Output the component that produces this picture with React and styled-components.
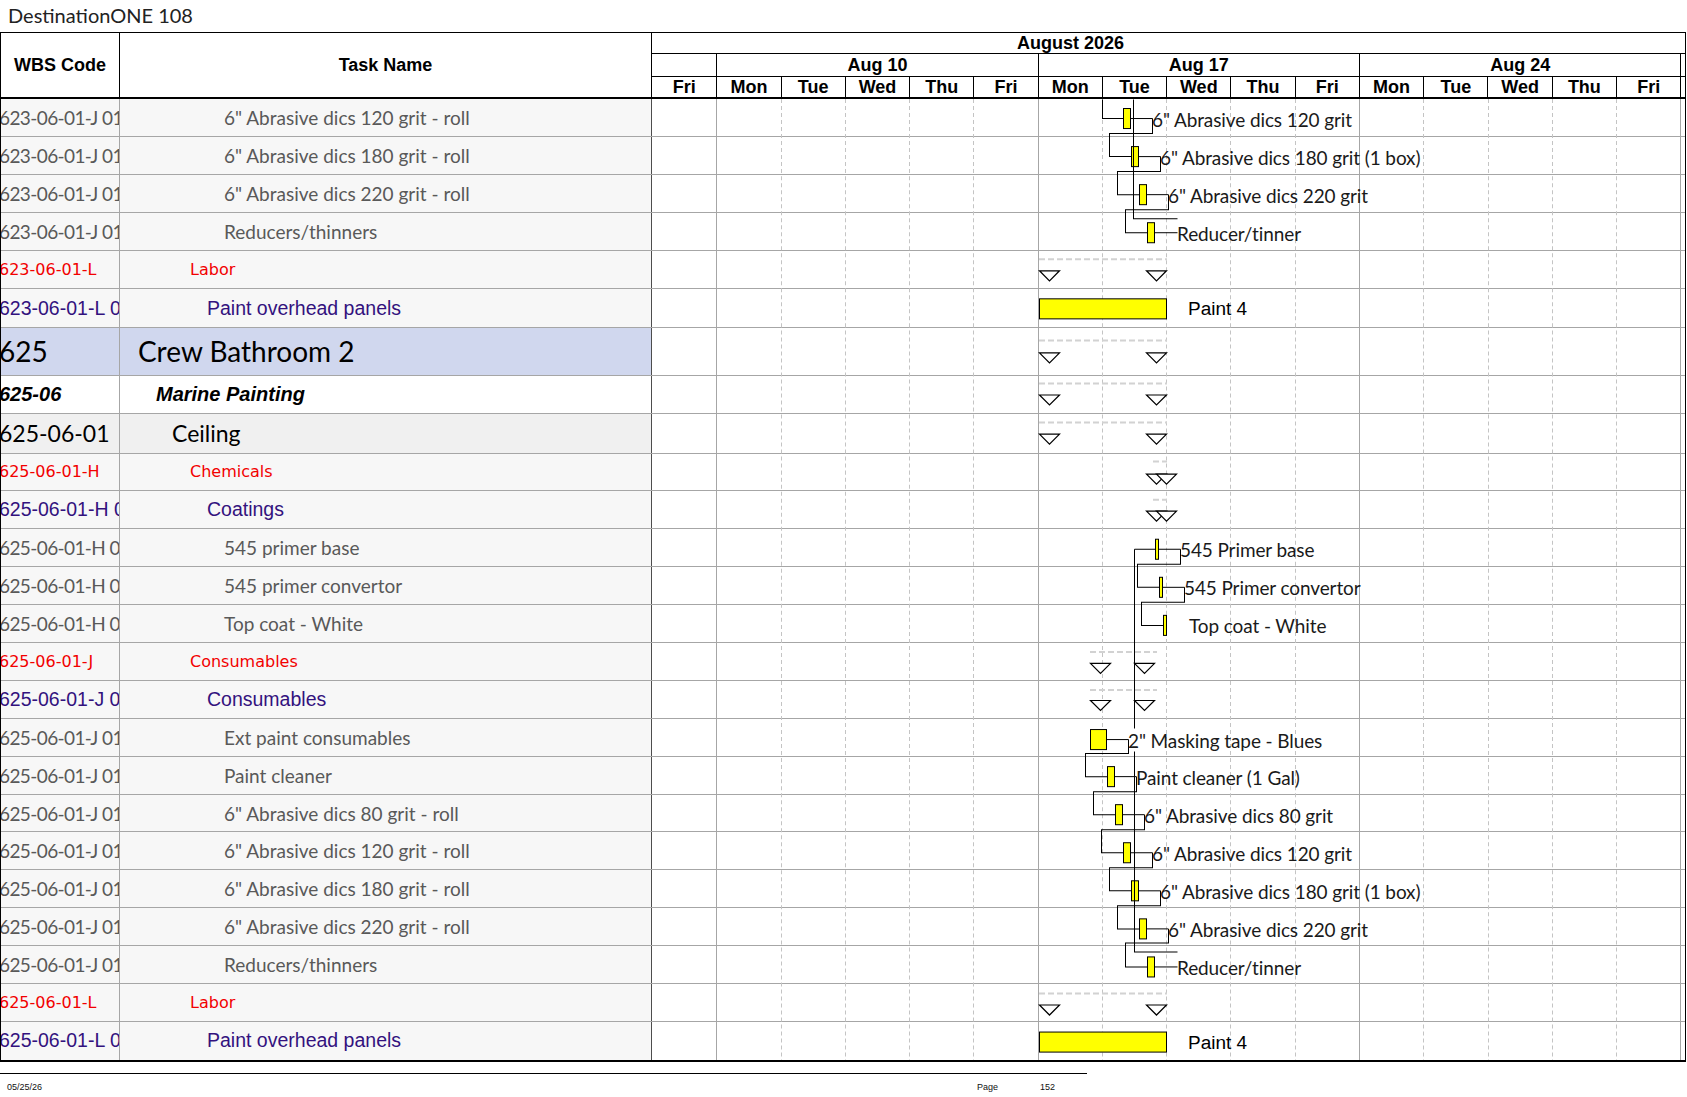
import React from 'react'
import styled, { createGlobalStyle, css } from 'styled-components'

const GlobalStyle = createGlobalStyle`
  html, body {
    margin: 0;
    padding: 0;
    background: #fff;
  }
  body {
    font-family: 'Liberation Sans', Arial, sans-serif;
  }
  * {
    box-sizing: border-box;
  }
`

const Page = styled.div`
  width: 1687px;
  height: 1097px;
  overflow: hidden;
  background: #fff;
`

const Title = styled.div`
  height: 32px;
  padding-left: 8px;
  font-family: Lato, sans-serif;
  font-size: 20px;
  line-height: 30px;
  color: #222;
`

const Table = styled.div`
  width: 1686px;
  border: 1px solid #000;
  border-bottom: 2px solid #000;
`

const Header = styled.div`
  display: flex;
  height: 66px;
  border-bottom: 2px solid #000;
`

const HeadCell = styled.div`
  flex: none;
  width: ${p => p.$w}px;
  display: flex;
  align-items: center;
  justify-content: center;
  border-right: 1px solid #000;
  font-size: 18px;
  font-weight: bold;
`

const Timescale = styled.div`
  flex: 1;
  display: flex;
  flex-direction: column;
`

const ScaleRow = styled.div`
  display: flex;
  height: ${p => p.$h}px;
  border-bottom: ${p => (p.$last ? 'none' : '1px solid #000')};
`

const ScaleCell = styled.div`
  flex: ${p => (p.$w ? 'none' : '1')};
  width: ${p => (p.$w ? `${p.$w}px` : 'auto')};
  display: flex;
  align-items: center;
  justify-content: ${p => (p.$pad ? 'flex-start' : 'center')};
  padding-left: ${p => p.$pad || 0}px;
  border-right: ${p => (p.$open ? 'none' : '1px solid #000')};
  font-size: 18px;
  font-weight: bold;
  line-height: 1;
  white-space: nowrap;
`

const Body = styled.div`
  position: relative;
`

const Row = styled.div`
  display: flex;
  height: ${p => p.$h}px;
  border-bottom: ${p => (p.$last ? 'none' : '1px solid #a6a6a6')};
`

const kindFont = {
  item: css`
    font-family: Lato, sans-serif;
    font-size: 19px;
    color: #595959;
  `,
  group: css`
    font-family: 'DejaVu Sans', sans-serif;
    font-size: 16px;
    color: #f20000;
  `,
  sub: css`
    font-family: 'Liberation Sans', Arial, sans-serif;
    font-size: 19.5px;
    color: #33127e;
  `,
  area: css`
    font-family: Lato, sans-serif;
    font-size: 28px;
    color: #000;
  `,
  trade: css`
    font-family: 'Liberation Sans', Arial, sans-serif;
    font-size: 20px;
    font-weight: bold;
    font-style: italic;
    color: #000;
  `,
  zone: css`
    font-family: Lato, sans-serif;
    font-size: 23px;
    color: #000;
  `,
}

const indent = { item: 104, group: 70, sub: 87, area: 18, trade: 36, zone: 52 }
const rowBg = { area: '#d0d7ee', trade: '#fff', zone: '#f0f0f0' }

const WbsCell = styled.div`
  flex: none;
  width: 119px;
  display: flex;
  align-items: center;
  overflow: hidden;
  white-space: nowrap;
  text-indent: -2px;
  border-right: 1px solid #a6a6a6;
  background: ${p => rowBg[p.$kind] || '#f7f7f7'};
  ${p => kindFont[p.$kind]}
  ${p => p.$kind === 'item' && css`
    letter-spacing: -0.6px;
  `}
`

const TaskCell = styled.div`
  flex: none;
  width: 532px;
  display: flex;
  align-items: center;
  padding-left: ${p => indent[p.$kind]}px;
  overflow: hidden;
  white-space: nowrap;
  border-right: 1px solid #4d4d4d;
  background: ${p => rowBg[p.$kind] || '#f7f7f7'};
  ${p => kindFont[p.$kind]}
`

const GanttCell = styled.div`
  flex: 1;
  background: #fff;
`

const Chart = styled.svg`
  position: absolute;
  top: 0;
  left: 651px;
  pointer-events: none;
`

const Footer = styled.div`
  width: 1087px;
  margin-top: 11px;
  border-top: 1.5px solid #000;
  padding: 8px 0 0 7px;
  display: grid;
  grid-template-columns: 970px 63px auto;
  font-size: 9px;
  color: #111;
`

const rows = [
  { wbs: '623-06-01-J 01 04', name: '6" Abrasive dics 120 grit - roll', kind: 'item' },
  { wbs: '623-06-01-J 01 05', name: '6" Abrasive dics 180 grit - roll', kind: 'item' },
  { wbs: '623-06-01-J 01 06', name: '6" Abrasive dics 220 grit - roll', kind: 'item' },
  { wbs: '623-06-01-J 01 07', name: 'Reducers/thinners', kind: 'item' },
  { wbs: '623-06-01-L', name: 'Labor', kind: 'group' },
  { wbs: '623-06-01-L 01', name: 'Paint overhead panels', kind: 'sub' },
  { wbs: '625', name: 'Crew Bathroom 2', kind: 'area', h: 48.6 },
  { wbs: '625-06', name: 'Marine Painting', kind: 'trade', h: 37.4 },
  { wbs: '625-06-01', name: 'Ceiling', kind: 'zone', h: 40 },
  { wbs: '625-06-01-H', name: 'Chemicals', kind: 'group' },
  { wbs: '625-06-01-H 01', name: 'Coatings', kind: 'sub' },
  { wbs: '625-06-01-H 01 01', name: '545 primer base', kind: 'item' },
  { wbs: '625-06-01-H 01 02', name: '545 primer convertor', kind: 'item' },
  { wbs: '625-06-01-H 01 03', name: 'Top coat - White', kind: 'item' },
  { wbs: '625-06-01-J', name: 'Consumables', kind: 'group' },
  { wbs: '625-06-01-J 01', name: 'Consumables', kind: 'sub' },
  { wbs: '625-06-01-J 01 01', name: 'Ext paint consumables', kind: 'item' },
  { wbs: '625-06-01-J 01 02', name: 'Paint cleaner', kind: 'item' },
  { wbs: '625-06-01-J 01 03', name: '6" Abrasive dics 80 grit - roll', kind: 'item' },
  { wbs: '625-06-01-J 01 04', name: '6" Abrasive dics 120 grit - roll', kind: 'item' },
  { wbs: '625-06-01-J 01 05', name: '6" Abrasive dics 180 grit - roll', kind: 'item' },
  { wbs: '625-06-01-J 01 06', name: '6" Abrasive dics 220 grit - roll', kind: 'item' },
  { wbs: '625-06-01-J 01 07', name: 'Reducers/thinners', kind: 'item' },
  { wbs: '625-06-01-L', name: 'Labor', kind: 'group' },
  { wbs: '625-06-01-L 01', name: 'Paint overhead panels', kind: 'sub' },
].map((r, i) => ({ ...r, h: r.h || (i < 6 ? 38.1 : 37.9) }))

const bodyHeight = rows.reduce((s, r) => s + r.h, 0)
// drawing space measured from the printout: body spans y 98 .. 1057.4
const DRAW_H = 959.4

const FRI = 65.3
const DAY = 64.27
const weeks = ['Aug 10', 'Aug 17', 'Aug 24']
const dayNames = ['Mon', 'Tue', 'Wed', 'Thu', 'Fri']

const tasks = [
  { x: 1123, w: 7, yc: 117, lx: 1152, label: '6" Abrasive dics 120 grit' },
  { x: 1131, w: 7, yc: 155, lx: 1160, label: '6" Abrasive dics 180 grit (1 box)' },
  { x: 1139, w: 7, yc: 193, lx: 1168, label: '6" Abrasive dics 220 grit' },
  { x: 1147, w: 7, yc: 231, lx: 1177, label: 'Reducer/tinner' },
  { x: 1155, w: 3, yc: 547, lx: 1180, label: '545 Primer base' },
  { x: 1159, w: 3, yc: 585, lx: 1184, label: '545 Primer convertor' },
  { x: 1163, w: 3, yc: 623, lx: 1189, label: 'Top coat - White', noTick: true },
  { x: 1090, w: 16, yc: 737, lx: 1128, label: '2" Masking tape - Blues' },
  { x: 1107, w: 7, yc: 774, lx: 1136, label: 'Paint cleaner (1 Gal)' },
  { x: 1115, w: 7, yc: 812, lx: 1144, label: '6" Abrasive dics 80 grit' },
  { x: 1123, w: 7, yc: 850, lx: 1152, label: '6" Abrasive dics 120 grit' },
  { x: 1131, w: 7, yc: 888, lx: 1160, label: '6" Abrasive dics 180 grit (1 box)' },
  { x: 1139, w: 7, yc: 926, lx: 1168, label: '6" Abrasive dics 220 grit' },
  { x: 1147, w: 7, yc: 964, lx: 1177, label: 'Reducer/tinner' },
]

const labour = [
  { y: 297, lx: 1188 },
  { y: 1029, lx: 1188 },
]

const links = [
  'M1102 98V117H1123',
  'M1152 117V132H1109V155H1131',
  'M1160 155V170H1117V193H1139',
  'M1168 193V208H1125V231H1147',
  'M1133 98V217H1177',
  'M1134 547H1155',
  'M1134 547V726',
  'M1134 749V949H1177',
  'M1180 547V562H1137V585H1159',
  'M1184 585V600H1141V623H1163',
  'M1128 737V751H1085V774H1107',
  'M1136 774V789H1093V812H1115',
  'M1144 812V827H1101V850H1123',
  'M1152 850V865H1109V888H1131',
  'M1160 888V903H1117V926H1139',
  'M1168 926V940H1125V964H1147',
]

const summaries = [
  { dy: 258, top: 269, d1: 1039, d2: 1167, tris: [1039, 1146] },
  { dy: 339, top: 351, d1: 1039, d2: 1167, tris: [1039, 1146] },
  { dy: 382, top: 393, d1: 1039, d2: 1167, tris: [1039, 1146] },
  { dy: 421, top: 432, d1: 1039, d2: 1167, tris: [1039, 1146] },
  { dy: 460, top: 472, d1: 1153, d2: 1167, tris: [1146, 1156] },
  { dy: 498, top: 509, d1: 1153, d2: 1167, tris: [1146, 1156] },
  { dy: 650, top: 661, d1: 1090, d2: 1157, tris: [1090, 1134] },
  { dy: 688, top: 698, d1: 1090, d2: 1157, tris: [1090, 1134] },
  { dy: 991, top: 1002, d1: 1039, d2: 1167, tris: [1039, 1146] },
]

const gridLines = Array.from({ length: 16 }, (_, k) => ({
  x: Math.round(652 + FRI + k * DAY) - 0.5,
  solid: k % 5 === 0,
}))

function GanttChart () {
  return (
    <Chart
      width="1033"
      height={bodyHeight}
      viewBox={`652 98 1033 ${DRAW_H}`}
      preserveAspectRatio="none"
    >
      {gridLines.map(g => (
        <line
          key={g.x}
          x1={g.x}
          x2={g.x}
          y1="98"
          y2={98 + DRAW_H}
          stroke={g.solid ? '#a6a6a6' : '#c4c4c4'}
          strokeDasharray={g.solid ? 'none' : '4 3'}
        />
      ))}

      {summaries.map((s, i) => (
        <g key={i}>
          <line
            x1={s.d1}
            x2={s.d2}
            y1={s.dy}
            y2={s.dy}
            stroke="#d2d2d2"
            strokeWidth="2"
            strokeDasharray="6 3"
          />
          {s.tris.map(t => (
            <polygon
              key={t}
              points={`${t + 0.5},${s.top + 0.5} ${t + 20.5},${s.top + 0.5} ${t + 10.5},${s.top + 10.5}`}
              fill="#fff"
              stroke="#000"
              strokeWidth="1.2"
            />
          ))}
        </g>
      ))}

      {labour.map(b => (
        <g key={b.y}>
          <rect x="1039.5" y={b.y + 0.5} width="127" height="20" fill="#ffff00" stroke="#000" />
          <text
            x={b.lx}
            y={b.y + 10.5}
            dominantBaseline="central"
            fontFamily="'Liberation Sans', Arial, sans-serif"
            fontSize="19"
            fill="#000"
          >
            Paint 4
          </text>
        </g>
      ))}

      <g transform="translate(0.5 0.5)">
        {tasks.map(t => (
          <g key={t.yc}>
            <rect x={t.x} y={t.yc - 10} width={t.w} height="20" fill="#ffff00" stroke="#000" />
            {!t.noTick && (
              <path d={`M${t.x + t.w} ${t.yc}H${t.lx}`} stroke="#000" fill="none" />
            )}
          </g>
        ))}
        {links.map(d => (
          <path key={d} d={d} stroke="#000" fill="none" />
        ))}
      </g>

      {tasks.map(t => (
        <text
          key={t.yc}
          x={t.lx}
          y={t.yc + 1}
          dominantBaseline="central"
          fontFamily="Lato, sans-serif"
          fontSize="19"
          letterSpacing="-0.1"
          fill="#1a1a1a"
        >
          {t.label}
        </text>
      ))}
    </Chart>
  )
}

export default function App () {
  return (
    <Page>
      <GlobalStyle />
      <Title>DestinationONE 108</Title>
      <Table>
        <Header>
          <HeadCell $w={119}>WBS Code</HeadCell>
          <HeadCell $w={532}>Task Name</HeadCell>
          <Timescale>
            <ScaleRow $h={21}>
              <ScaleCell $pad={365} $open>August 2026</ScaleCell>
            </ScaleRow>
            <ScaleRow $h={23}>
              <ScaleCell $w={FRI} />
              {weeks.map(w => (
                <ScaleCell key={w} $w={DAY * 5}>{w}</ScaleCell>
              ))}
              <ScaleCell $open />
            </ScaleRow>
            <ScaleRow $h={20} $last>
              <ScaleCell $w={FRI}>Fri</ScaleCell>
              {weeks.map(w =>
                dayNames.map(d => (
                  <ScaleCell key={w + d} $w={DAY}>{d}</ScaleCell>
                ))
              )}
              <ScaleCell $open />
            </ScaleRow>
          </Timescale>
        </Header>
        <Body>
          {rows.map((r, i) => (
            <Row key={i} $h={r.h} $last={i === rows.length - 1}>
              <WbsCell $kind={r.kind}>{r.wbs}</WbsCell>
              <TaskCell $kind={r.kind}>{r.name}</TaskCell>
              <GanttCell />
            </Row>
          ))}
          <GanttChart />
        </Body>
      </Table>
      <Footer>
        <span>05/25/26</span>
        <span>Page</span>
        <span>152</span>
      </Footer>
    </Page>
  )
}
